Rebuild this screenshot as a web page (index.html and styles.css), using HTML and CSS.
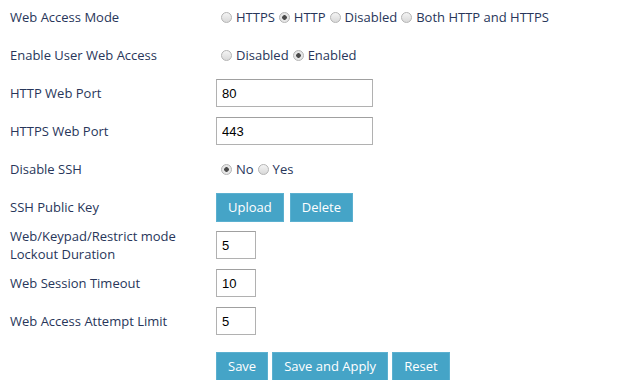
FILE: index.html
```html
<!DOCTYPE html>
<html lang="en">
<head>
    <meta charset="UTF-8">
    <meta name="viewport" content="width=device-width, initial-scale=1.0">
    <title>Web Access Settings</title>
    <link rel="stylesheet" href="styles.css">
</head>
<body>
    <form class="settings-form">
        <div class="form-row">
            <label class="field-label">Web Access Mode</label>
            <div class="field-control radio-group">
                <label><input type="radio" name="accessMode"> HTTPS</label>
                <label><input type="radio" name="accessMode" checked> HTTP</label>
                <label><input type="radio" name="accessMode"> Disabled</label>
                <label><input type="radio" name="accessMode"> Both HTTP and HTTPS</label>
            </div>
        </div>

        <div class="form-row">
            <label class="field-label">Enable User Web Access</label>
            <div class="field-control radio-group">
                <label><input type="radio" name="userAccess"> Disabled</label>
                <label><input type="radio" name="userAccess" checked> Enabled</label>
            </div>
        </div>

        <div class="form-row">
            <label class="field-label" for="httpPort">HTTP Web Port</label>
            <div class="field-control">
                <input type="text" id="httpPort" class="text-wide" value="80">
            </div>
        </div>

        <div class="form-row">
            <label class="field-label" for="httpsPort">HTTPS Web Port</label>
            <div class="field-control">
                <input type="text" id="httpsPort" class="text-wide" value="443">
            </div>
        </div>

        <div class="form-row">
            <label class="field-label">Disable SSH</label>
            <div class="field-control radio-group">
                <label><input type="radio" name="disableSsh" checked> No</label>
                <label><input type="radio" name="disableSsh"> Yes</label>
            </div>
        </div>

        <div class="form-row">
            <label class="field-label">SSH Public Key</label>
            <div class="field-control button-group wide-gap">
                <button type="button">Upload</button>
                <button type="button">Delete</button>
            </div>
        </div>

        <div class="form-row">
            <label class="field-label" for="lockout">Web/Keypad/Restrict mode Lockout Duration</label>
            <div class="field-control">
                <input type="text" id="lockout" class="text-small" value="5">
            </div>
        </div>

        <div class="form-row">
            <label class="field-label" for="timeout">Web Session Timeout</label>
            <div class="field-control">
                <input type="text" id="timeout" class="text-small" value="10">
            </div>
        </div>

        <div class="form-row">
            <label class="field-label" for="attempts">Web Access Attempt Limit</label>
            <div class="field-control">
                <input type="text" id="attempts" class="text-small" value="5">
            </div>
        </div>

        <!-- Action buttons -->
        <div class="form-row actions">
            <span class="field-label"></span>
            <div class="field-control button-group">
                <button type="submit">Save</button>
                <button type="submit">Save and Apply</button>
                <button type="reset">Reset</button>
            </div>
        </div>
    </form>
</body>
</html>
```

FILE: styles.css
```css
body {
    font-family: 'Open Sans', 'Liberation Sans', sans-serif;
    font-size: 13px;
    color: #28365a;
    background-color: #fff;
    margin: 0;
}

.settings-form {
    display: flex;
    flex-direction: column;
    gap: 10px;
    padding: 3px 0 0 10px;
}

.form-row {
    display: grid;
    grid-template-columns: 206px auto;
    grid-template-rows: 28px;
    align-items: center;
}

.field-label {
    line-height: 18px;
    padding-right: 20px;
}

.field-control {
    display: flex;
    align-items: center;
}

.radio-group {
    padding-left: 5px;
    gap: 4px;
}

.radio-group label {
    display: flex;
    align-items: center;
    gap: 4px;
}

input[type="radio"] {
    appearance: none;
    -webkit-appearance: none;
    width: 11px;
    height: 11px;
    margin: 0;
    border: 1px solid #b4b4b4;
    border-radius: 50%;
    background: linear-gradient(#f4f4f4, #d9d9d9);
    box-sizing: border-box;
}

input[type="radio"]:checked {
    background: radial-gradient(circle, #4a4a4a 0, #4a4a4a 2px, #e6e6e6 2.6px, #e6e6e6 100%);
}

input[type="text"] {
    font-family: 'Liberation Sans', Arial, sans-serif;
    font-size: 13px;
    color: #000;
    height: 28px;
    box-sizing: border-box;
    border: 1px solid #b1b1b1;
    border-top-color: #a0a0a0;
    padding: 0 5px;
    margin: 0;
    outline: none;
}

.text-wide {
    width: 157px;
}

.text-small {
    width: 40px;
}

.button-group {
    gap: 4px;
}

.button-group.wide-gap {
    gap: 6px;
}

button {
    font-family: 'Open Sans', 'Liberation Sans', sans-serif;
    font-size: 13px;
    color: #fff;
    background-color: #45a4c7;
    border: 1px solid #5bb0d0;
    height: 29px;
    padding: 0 11px;
    margin: 0;
    cursor: pointer;
}

button:hover {
    background-color: #3b96b8;
}

.actions {
    margin-top: 7px;
}
```
